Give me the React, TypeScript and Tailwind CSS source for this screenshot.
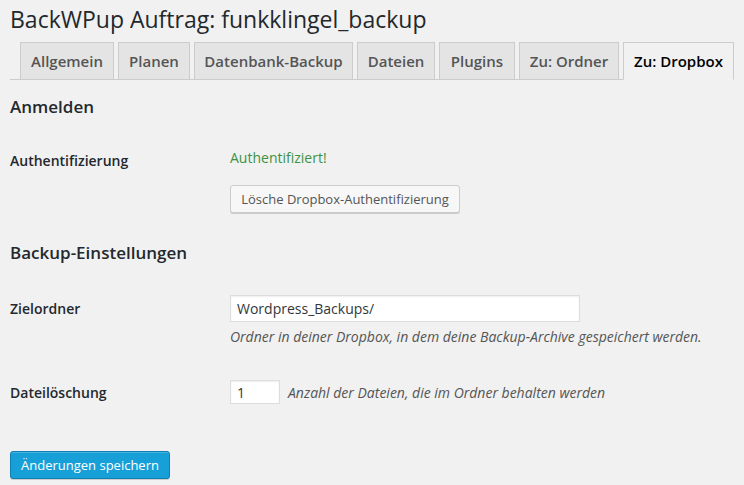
import React from 'react';

const tabs = [
  { label: 'Allgemein', w: 'w-[94px]' },
  { label: 'Planen', w: 'w-[72px]' },
  { label: 'Datenbank-Backup', w: 'w-[159px]' },
  { label: 'Dateien', w: 'w-[78px]' },
  { label: 'Plugins', w: 'w-[76px]' },
  { label: 'Zu: Ordner', w: 'w-[100px]' },
  { label: 'Zu: Dropbox', w: 'w-[111px]' },
];

export default function App() {
  return (
    <div
      className="min-h-screen bg-[#f1f1f1] px-[10px] text-[#23282d]"
      style={{ fontFamily: '"Open Sans", "Noto Sans", sans-serif' }}
    >
      {/* Titel */}
      <h1 className="pt-[5px] text-[23px] leading-[29px] font-normal text-[#23282d]">
        BackWPup Auftrag: funkklingel_backup
      </h1>

      {/* Tabs */}
      <div className="mt-[8px] flex items-end gap-[4px] border-b border-[#cccccc] pl-[10px]">
        {tabs.map((t, i) => {
          const active = i === tabs.length - 1;
          return (
            <div
              key={t.label}
              className={
                active
                  ? `${t.w} mb-[-1px] flex h-[38px] shrink-0 items-center justify-center whitespace-nowrap border border-b-[#f1f1f1] border-[#cccccc] bg-[#f1f1f1] text-[15px] font-semibold text-black`
                  : `${t.w} flex h-[37px] shrink-0 items-center justify-center whitespace-nowrap border border-b-0 border-[#cccccc] bg-[#e4e4e4] text-[15px] font-semibold text-[#555555]`
              }
            >
              {t.label}
            </div>
          );
        })}
      </div>

      {/* Anmelden */}
      <h3 className="mt-[15px] text-[17px] leading-[24px] font-semibold">Anmelden</h3>

      <div className="mt-[28px] flex items-start">
        <div className="w-[220px] pt-[3px] text-[14px] leading-[22px] font-semibold">Authentifizierung</div>
        <div className="flex flex-col items-start">
          <span className="text-[14px] leading-[22px] text-[#3f9142]">Authentifiziert!</span>
          <button className="mt-[16px] h-[28px] w-[230px] rounded-[3px] border border-[#cccccc] bg-[#f7f7f7] text-[13px] leading-[26px] text-[#555555] shadow-[0_1px_0_#cccccc]">
            Lösche Dropbox-Authentifizierung
          </button>
        </div>
      </div>

      {/* Backup-Einstellungen */}
      <h3 className="mt-[28px] text-[17px] leading-[24px] font-semibold">Backup-Einstellungen</h3>

      <div className="mt-[30px] flex items-start">
        <div className="flex h-[27px] w-[220px] items-center text-[14px] font-semibold">Zielordner</div>
        <div className="flex flex-col items-start">
          <div className="flex h-[27px] w-[350px] items-center border border-[#dddddd] bg-white px-[6px] text-[14px] text-[#32373c] shadow-[inset_0_1px_2px_rgba(0,0,0,0.07)]">
            Wordpress_Backups/
          </div>
          <p className="mt-[5px] text-[14px] leading-[20px] italic text-[#555555]">
            Ordner in deiner Dropbox, in dem deine Backup-Archive gespeichert werden.
          </p>
        </div>
      </div>

      <div className="mt-[33px] flex items-center">
        <div className="w-[220px] text-[14px] font-semibold">Dateilöschung</div>
        <div className="flex h-[24px] w-[50px] items-center border border-[#dddddd] bg-white px-[6px] text-[14px] text-[#32373c] shadow-[inset_0_1px_2px_rgba(0,0,0,0.07)]">
          1
        </div>
        <span className="ml-[8px] text-[14px] italic text-[#555555]">
          Anzahl der Dateien, die im Ordner behalten werden
        </span>
      </div>

      <button className="mt-[47px] h-[28px] w-[160px] rounded-[3px] border border-[#0e7fb0] bg-[#17a0d8] text-[13px] leading-[26px] text-white shadow-[inset_0_1px_0_rgba(120,200,230,0.5),0_1px_0_rgba(0,0,0,0.15)]">
        Änderungen speichern
      </button>
    </div>
  );
}
